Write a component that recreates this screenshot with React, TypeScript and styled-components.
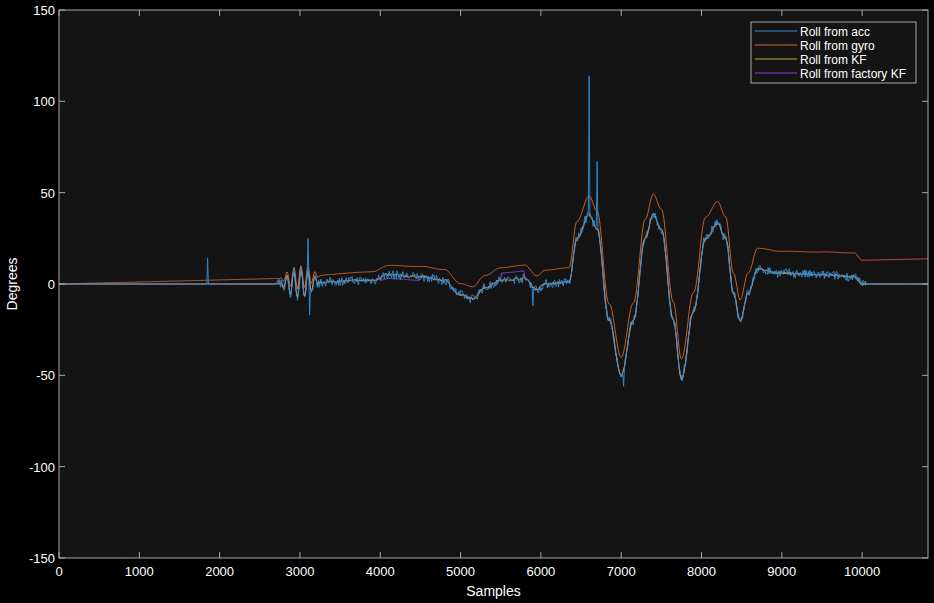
import React, { useMemo } from "react";
import styled, { createGlobalStyle } from "styled-components";

const Global = createGlobalStyle`
  html, body { margin: 0; padding: 0; background: #000; }
  body { font-family: "Liberation Sans", Arial, sans-serif; }
`;

// plot geometry
const X0 = 59;
const X1 = 928;
const Y0 = 10;
const Y1 = 558;
const XMAX = 10820;
const sx = (v: number) => X0 + (v / XMAX) * (X1 - X0);
const sy = (v: number) => Y0 + ((150 - v) / 300) * (Y1 - Y0);

// keyframes of the underlying roll angle
const keys: [number, number][] = [
  [0, 0], [2700, 0], [3900, 2], [4100, 5], [4500, 4], [4800, 2], [5000, -6],
  [5150, -8], [5300, -2], [5500, 2], [5800, 3], [5950, -3], [6050, 0], [6350, 1],
  [6450, 25], [6600, 38], [6700, 30], [6850, -20], [7000, -50], [7150, -20],
  [7300, 25], [7400, 38], [7500, 30], [7650, -20], [7750, -52], [7900, -15],
  [8050, 25], [8200, 33], [8300, 25], [8400, -5], [8480, -20], [8580, -5],
  [8700, 8], [9000, 6], [9500, 5], [9900, 4], [10000, 0], [10820, 0],
];

const base = (t: number) => {
  for (let i = 0; i < keys.length - 1; i++) {
    const [a, va] = keys[i];
    const [b, vb] = keys[i + 1];
    if (t >= a && t <= b) {
      const f = (1 - Math.cos(((t - a) / (b - a)) * Math.PI)) / 2;
      return va + (vb - va) * f;
    }
  }
  return 0;
};

const wobble = (t: number) =>
  t > 2750 && t < 3250 ? Math.sin(t / 14) * 8 * Math.sin(((t - 2750) / 500) * Math.PI) : 0;

const gyroDrift = (t: number) => {
  if (t < 2700) return (t / 2700) * 3;
  if (t < 6400) return 3 + ((t - 2700) / 3700) * 5;
  if (t < 8600) return 8 + ((t - 6400) / 2200) * 3;
  if (t < 10000) return 11 + ((t - 8600) / 1400) * 2;
  return 13 + ((t - 10000) / 820) * 0.8;
};

function rng(seed: number) {
  let s = seed;
  return () => {
    s = (s * 16807) % 2147483647;
    return (s - 1) / 2147483646;
  };
}

const spikes: Record<number, number> = { 1850: 14, 3100: 25, 3120: -17, 6600: 114, 6700: 67, 5900: -12, 7030: -56 };

function buildPaths() {
  const r = rng(7);
  const acc: string[] = [];
  const gyro: string[] = [];
  const kf: string[] = [];
  const fac: string[] = [];
  for (let t = 0; t <= XMAX; t += 10) {
    const b = base(t) + wobble(t);
    const active = t > 2700 && t < 10050;
    const n = active ? (r() - 0.5) * 5 : (r() - 0.5) * 0.3;
    let a = b + n;
    if (spikes[t] !== undefined) a = spikes[t];
    const bb = base(t);
    const g = (bb > 0 ? bb * 1.05 : bb * 0.98) + wobble(t) * 0.8 + gyroDrift(t);
    const k = b + (active ? (r() - 0.5) * 1.5 : 0);
    const f = b + (t > 5500 && t < 5800 ? 4 : 0) + (t > 4000 && t < 4500 ? -2 : 0);
    const c = acc.length ? "L" : "M";
    acc.push(`${c}${sx(t).toFixed(1)},${sy(a).toFixed(1)}`);
    gyro.push(`${c}${sx(t).toFixed(1)},${sy(g).toFixed(1)}`);
    kf.push(`${c}${sx(t).toFixed(1)},${sy(k).toFixed(1)}`);
    fac.push(`${c}${sx(t).toFixed(1)},${sy(f).toFixed(1)}`);
  }
  return { acc: acc.join(""), gyro: gyro.join(""), kf: kf.join(""), fac: fac.join("") };
}

const Frame = styled.div`
  width: 934px;
  height: 603px;
  background: #000;
`;

const Chart = styled.svg`
  display: block;
  font-family: "Liberation Sans", Arial, sans-serif;
`;

const COLORS = { acc: "#2f8fd8", gyro: "#d9682a", kf: "#c8a83a", fac: "#9a3ee0" };
const legend = [
  ["Roll from acc", COLORS.acc],
  ["Roll from gyro", COLORS.gyro],
  ["Roll from KF", COLORS.kf],
  ["Roll from factory KF", COLORS.fac],
];

export default function App() {
  const p = useMemo(buildPaths, []);
  const yTicks = [150, 100, 50, 0, -50, -100, -150];
  const xTicks = [0, 1000, 2000, 3000, 4000, 5000, 6000, 7000, 8000, 9000, 10000];
  return (
    <Frame>
      <Global />
      <Chart width={934} height={603}>
        <defs>
          <clipPath id="clip">
            <rect x={X0} y={Y0} width={X1 - X0} height={Y1 - Y0} />
          </clipPath>
        </defs>
        <rect x={X0} y={Y0} width={X1 - X0} height={Y1 - Y0} fill="#141414" />
        <g clipPath="url(#clip)" strokeLinejoin="round">
          <path d={p.gyro} fill="none" stroke={COLORS.gyro} strokeWidth={0.9} />
          <path d={p.fac} fill="none" stroke={COLORS.fac} strokeWidth={0.9} />
          <path d={p.kf} fill="none" stroke={COLORS.kf} strokeWidth={0.9} />
          <path d={p.acc} fill="none" stroke={COLORS.acc} strokeWidth={0.9} />
        </g>
        <rect x={X0} y={Y0} width={X1 - X0} height={Y1 - Y0} fill="none" stroke="#a8a8a8" strokeWidth={1} />
        {yTicks.map((v) => (
          <g key={v}>
            <line x1={X0} x2={X0 + 6} y1={sy(v)} y2={sy(v)} stroke="#a8a8a8" />
            <line x1={X1 - 6} x2={X1} y1={sy(v)} y2={sy(v)} stroke="#a8a8a8" />
            <text x={X0 - 4} y={sy(v) + 5} fill="#fff" fontSize={13} textAnchor="end">{v}</text>
          </g>
        ))}
        {xTicks.map((v) => (
          <g key={v}>
            <line x1={sx(v)} x2={sx(v)} y1={Y1} y2={Y1 - 6} stroke="#a8a8a8" />
            <line x1={sx(v)} x2={sx(v)} y1={Y0} y2={Y0 + 6} stroke="#a8a8a8" />
            <text x={sx(v)} y={Y1 + 18} fill="#fff" fontSize={13} textAnchor="middle">{v}</text>
          </g>
        ))}
        <text x={(X0 + X1) / 2} y={596} fill="#fff" fontSize={14} textAnchor="middle">Samples</text>
        <text transform="translate(17 284) rotate(-90)" fill="#fff" fontSize={14} textAnchor="middle">Degrees</text>
        <rect x={751} y={22} width={165} height={61} fill="#141414" stroke="#a8a8a8" />
        {legend.map(([label, color], i) => (
          <g key={label}>
            <line x1={755} x2={797} y1={31 + i * 14} y2={31 + i * 14} stroke={color} />
            <text x={800} y={35.5 + i * 14} fill="#fff" fontSize={12}>{label}</text>
          </g>
        ))}
      </Chart>
    </Frame>
  );
}
